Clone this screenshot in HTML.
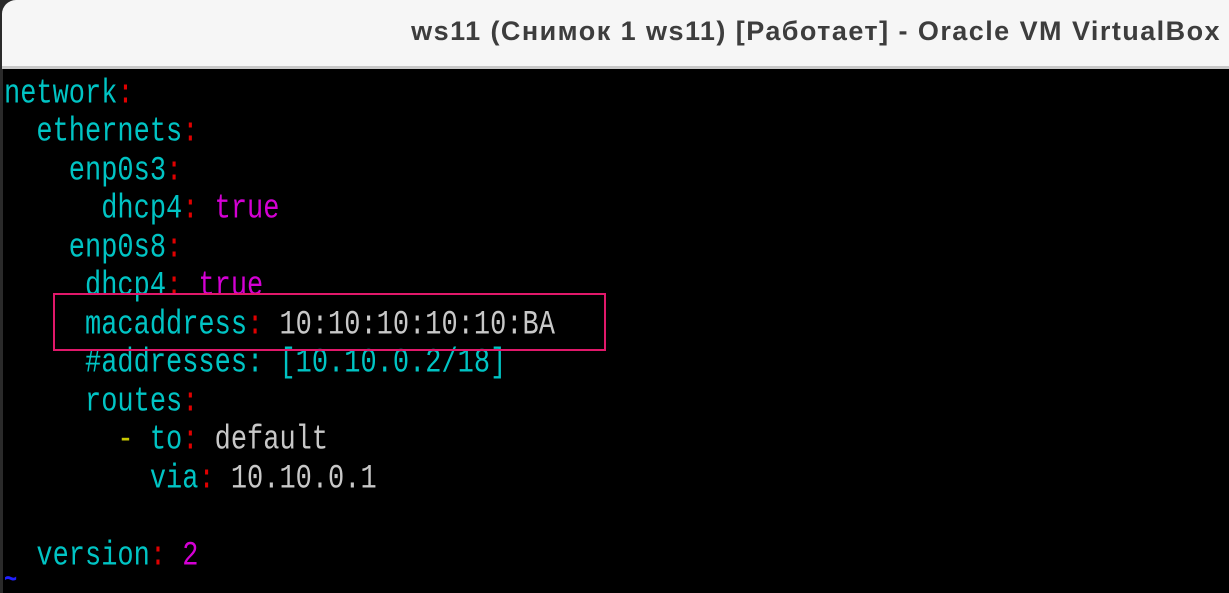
<!DOCTYPE html>
<html><head><meta charset="utf-8"><style>
html,body{margin:0;padding:0;width:1229px;height:593px;overflow:hidden;background:#2a2a2a;position:relative;}
#title{position:absolute;left:2px;top:0;width:1227px;height:66px;background:#f6f6f6;border-top-left-radius:14px;overflow:hidden;}
#title span{position:absolute;right:8px;top:16px;font:bold 27px "Liberation Sans","DejaVu Sans",sans-serif;letter-spacing:1.45px;color:#3d3d3d;white-space:nowrap;}
#sep{position:absolute;left:2px;top:66px;width:1227px;height:3px;background:#c8c8c8;}
#term{position:absolute;left:3px;top:69px;width:1226px;height:524px;background:#000;overflow:hidden;}
.l{position:absolute;left:1px;height:38px;font:27px/38px "Liberation Mono","DejaVu Sans Mono",monospace;white-space:pre;color:#00c4c4;transform:scaleY(1.28);transform-origin:0 50%;}
.r{color:#e00000}.m{color:#d400d4}.g{color:#c8c8c8}.y{color:#c8c800}.b{color:#2020ff}
#box{position:absolute;left:50px;top:224px;width:549px;height:54px;border:2px solid #e0186a;}
</style></head><body>
<div id="title"><span>ws11 (Снимок 1 ws11) [Работает] - Oracle VM VirtualBox</span></div>
<div id="sep"></div>
<div id="term">
<div class="l" style="top:7px">network<span class="r">:</span></div>
<div class="l" style="top:45px">  ethernets<span class="r">:</span></div>
<div class="l" style="top:84px">    enp0s3<span class="r">:</span></div>
<div class="l" style="top:122px">      dhcp4<span class="r">:</span> <span class="m">true</span></div>
<div class="l" style="top:161px">    enp0s8<span class="r">:</span></div>
<div class="l" style="top:199px">     dhcp4<span class="r">:</span> <span class="m">true</span></div>
<div class="l" style="top:238px">     macaddress<span class="r">:</span> <span class="g">10:10:10:10:10:BA</span></div>
<div class="l" style="top:276px">     #addresses: [10.10.0.2/18]</div>
<div class="l" style="top:315px">     routes<span class="r">:</span></div>
<div class="l" style="top:353px">       <span class="y">-</span> to<span class="r">:</span> <span class="g">default</span></div>
<div class="l" style="top:392px">         via<span class="r">:</span> <span class="g">10.10.0.1</span></div>
<div class="l" style="top:469px">  version<span class="r">:</span> <span class="m">2</span></div>
<div class="l b" style="top:500px;height:24px;line-height:24px;font-size:22px;font-weight:bold">~</div>
<div id="box"></div>
</div>
</body></html>
